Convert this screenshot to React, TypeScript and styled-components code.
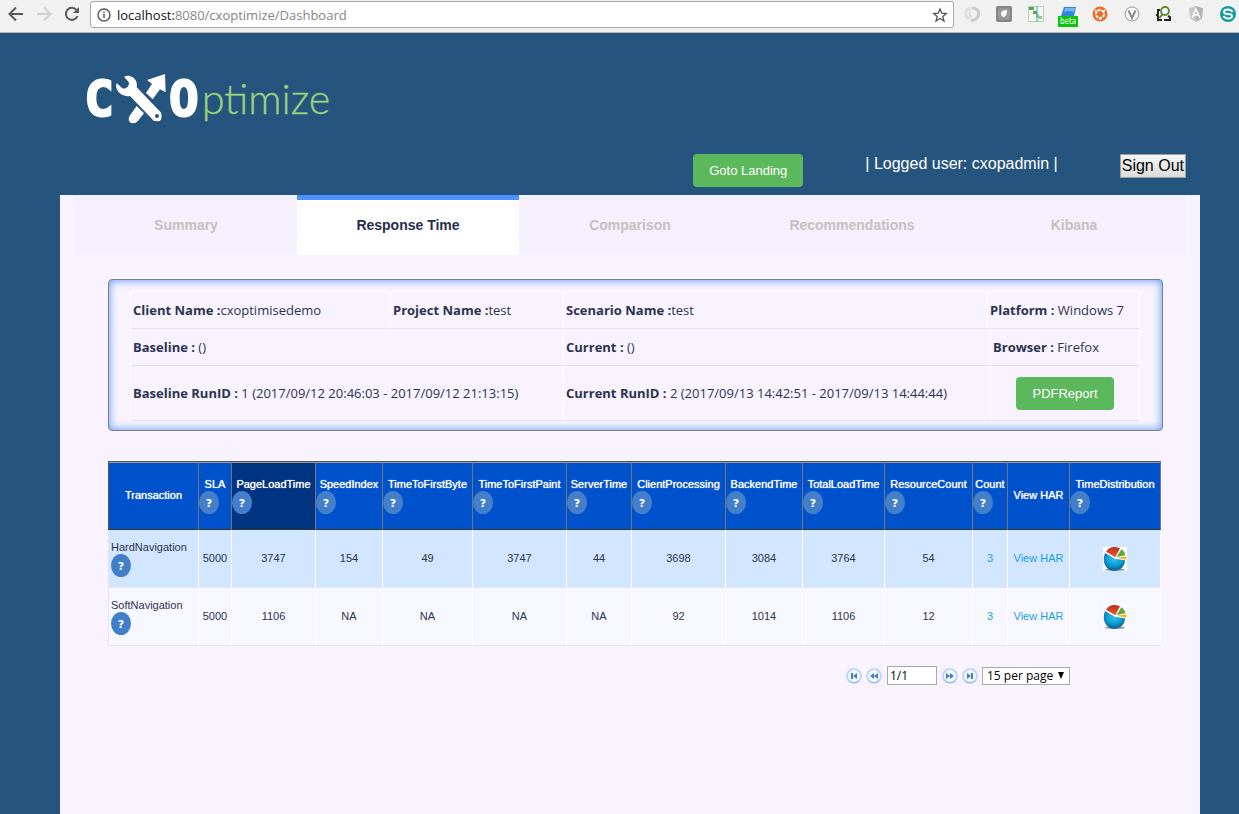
import React from "react";
import styled, { createGlobalStyle } from "styled-components";

const arial = `"Liberation Sans", Arial, sans-serif`;
const humanist = `"Open Sans", "Noto Sans", sans-serif`;

const GlobalStyle = createGlobalStyle`
  * { box-sizing: border-box; }
  body { margin: 0; background: #25547e; font-family: ${arial}; }
  button, input, select { font-family: inherit; margin: 0; }
`;

const Page = styled.div`
  min-height: 100vh;
  display: flex;
  flex-direction: column;
`;

const Toolbar = styled.nav`
  height: 33px;
  display: flex;
  align-items: flex-start;
  background: #f1f1f1;
  border-bottom: 1px solid #b4b4b4;
  padding: 1px 3px 0 8px;
`;

const NavButtons = styled.div`
  display: flex;
  gap: 12px;
  padding-top: 5px;
  margin-right: 10px;
`;

const IconButton = styled.button`
  width: 16px;
  height: 16px;
  padding: 0;
  border: 0;
  background: none;
  display: block;
  flex: none;
  svg { display: block; overflow: visible; }
`;

const AddressBar = styled.div`
  flex: 1;
  min-width: 0;
  height: 27px;
  display: flex;
  align-items: center;
  gap: 5px;
  padding: 0 5px;
  background: #fff;
  border: 1px solid #a9a9a9;
  border-radius: 3px;
`;

const Url = styled.div`
  flex: 1;
  font: 13px/20px ${humanist};
  color: #858585;
  span { color: #111; }
`;

const Extensions = styled.div`
  display: flex;
  gap: 16px;
  padding: 5px 0 0 10px;
`;

const Header = styled.header`
  height: 162px;
  padding: 37px 53px 0 84px;
`;

const UserRow = styled.div`
  display: flex;
  justify-content: flex-end;
  align-items: flex-start;
  margin-top: 24px;
`;

const LogoSvg = styled.svg`
  display: block;
`;

const GreenButton = styled.button`
  height: 33px;
  padding: 0 16px;
  border: 0;
  border-radius: 4px;
  background: #5cb85c;
  color: #fff;
  font-family: ${arial};
  font-size: 13px;
`;

const LoggedUser = styled.span`
  margin: 0 62px;
  color: #fff;
  font-size: 16px;
  line-height: 20px;
`;

const SignOut = styled.button`
  height: 24px;
  padding: 0 1px;
  border: 1px solid #a0a0a0;
  background: linear-gradient(#f6f6f6, #dcdcdc);
  color: #000;
  font-size: 16px;
`;

const Panel = styled.main`
  flex: 1;
  margin: 0 39px 0 60px;
  background: #f8f3fe;
`;

const Tabs = styled.div`
  display: flex;
  margin: 0 15px;
  background: #f4f0fe;
`;

const Tab = styled.button<{ $active?: boolean }>`
  flex: 1;
  height: 60px;
  padding: 0;
  border: 0;
  background: ${(p) => (p.$active ? "#fff" : "transparent")};
  box-shadow: ${(p) => (p.$active ? "inset 0 5px #4d90fe" : "none")};
  color: ${(p) => (p.$active ? "#252e4e" : "#c4c2bf")};
  font-size: 14px;
  font-weight: bold;
`;

const Content = styled.div`
  padding: 24px 37px 0 48px;
`;

const InfoCard = styled.section`
  padding: 11px 22px 9px 21px;
  border: 1px solid #808080;
  border-radius: 4px;
  box-shadow: inset 0 0 8px #4d90fe;
`;

const InfoTable = styled.table`
  width: 100%;
  table-layout: fixed;
  border-spacing: 0;
  border-top: 1px solid #fff;
  border-left: 1px solid #fff;
  font: 13px/16px ${humanist};
  color: #2b3350;
`;

const Col = styled.col<{ $w: number }>`
  width: ${(p) => p.$w}px;
`;

const InfoRow = styled.tr<{ $tall?: boolean }>`
  height: ${(p) => (p.$tall ? 55 : 37)}px;
`;

const InfoCell = styled.td<{ $center?: boolean }>`
  padding: 0 2px;
  border-right: 1px solid #fff;
  border-bottom: 1px solid #e6e3e8;
  text-align: ${(p) => (p.$center ? "center" : "left")};
  white-space: nowrap;
`;

const DataTable = styled.table`
  width: calc(100% - 2px);
  margin-top: 30px;
  table-layout: fixed;
  border-spacing: 0;
  font-size: 11px;
  line-height: 13px;
  color: #2b3350;
`;

const HeadCell = styled.th<{ $sorted?: boolean }>`
  height: 69px;
  padding: 0;
  background: ${(p) => (p.$sorted ? "#003380" : "#0052cc")};
  border-top: 1px solid #555;
  border-right: 1px solid #777;
  border-bottom: 1px solid #333;
  box-shadow: inset 0 1px #999;
  color: #fff;
  font-weight: normal;
  text-shadow: 0 0 1px #fff;
  white-space: nowrap;
  &:first-child { border-left: 1px solid #555; }
`;

const BodyRow = styled.tr<{ $shaded?: boolean }>`
  height: 58px;
  background: ${(p) => (p.$shaded ? "#d2e6ff" : "#f7f7ff")};
`;

const BodyCell = styled.td`
  padding: 0;
  border-right: 1px solid #fff;
  border-bottom: 1px solid #e6e6e6;
  text-align: center;
  &:first-child {
    padding-left: 2px;
    border-left: 1px solid #e6e6e6;
    text-align: left;
  }
  svg { display: block; margin: 0 auto; }
`;

const CellLink = styled.a`
  color: #1ba1e2;
  text-decoration: none;
`;

const Help = styled.button<{ $inHead?: boolean }>`
  display: block;
  width: 20px;
  height: 23px;
  padding: 2px 0 0;
  border: 0;
  border-radius: 50%;
  background: ${(p) => (p.$inHead ? "#447fcb" : "#427fcb")};
  color: #fff;
  font: bold 11px/13px "DejaVu Sans", Verdana, sans-serif;
`;

const Pager = styled.form`
  display: flex;
  justify-content: flex-end;
  align-items: center;
  gap: 4px;
  margin: 20px 93px 0 0;
  font-family: ${humanist};
`;

const PageInput = styled.input`
  width: 50px;
  height: 19px;
  margin: 0 1px;
  padding: 0 2px;
  border: 1px solid #a9a9a9;
  background: #fff;
  font-size: 12px;
`;

const SelectWrap = styled.div`
  position: relative;
  &::after {
    content: "";
    position: absolute;
    right: 6px;
    top: 5px;
    border: 3px solid transparent;
    border-top: 7px solid #000;
    border-bottom: 0;
    pointer-events: none;
  }
`;

const PageSelect = styled.select`
  display: block;
  width: 88px;
  height: 18px;
  padding: 0 4px;
  appearance: none;
  border: 1px solid #a9a9a9;
  border-radius: 0;
  background: #fff;
  color: #000;
  font-size: 12px;
  line-height: 16px;
`;

function Logo() {
  return (
    <LogoSvg width="250" height="60" viewBox="42 30 750 180" role="img" aria-label="CXOptimize">
      <g fill="#fff" stroke="#fff" strokeWidth="6" fontFamily="DejaVu Sans Mono, monospace" fontWeight="bold" fontSize="148">
        <text x="43" y="168">C</text>
        <text x="297" y="168">O</text>
      </g>
      <g fill="#fff">
        <path d="M231 60 285 42 287 97 270 88 248 118 228 99 246 71Z" />
        <path d="M200 138 222 160 203 184C194 193 178 191 176 179Q175 172 180 166Z" />
      </g>
      <path
        d="M162 50C176 43 193 50 199 65Q202 74 200 82L272 157Q277 165 273 179L268 184 252 183 180 108C163 111 145 101 139 84Q137 76 140 69L156 84Q164 89 173 80 180 73 176 66Z"
        fill="#fff"
        stroke="#25547e"
        strokeWidth="8"
        paintOrder="stroke"
      />
      <circle cx="261" cy="168" r="6" fill="#25547e" />
      <text x="395" y="162" fill="#9bd27c" stroke="#9bd27c" fontFamily="Lato, sans-serif" fontWeight="300" fontSize="124">ptimize</text>
    </LogoSvg>
  );
}

function Pie() {
  return (
    <svg width="24" height="24" viewBox="0 0 72 72" role="img" aria-label="Time distribution">
      <defs>
        <radialGradient id="pieBlue" cx="50%" cy="35%" r="65%">
          <stop offset="0" stopColor="#35c4ef" />
          <stop offset="0.6" stopColor="#0b98d0" />
          <stop offset="1" stopColor="#075b86" />
        </radialGradient>
        <linearGradient id="pieRed" x1="0" y1="0" x2="0" y2="1">
          <stop offset="0" stopColor="#b8321a" />
          <stop offset="1" stopColor="#ec5a32" />
        </linearGradient>
      </defs>
      <rect width="72" height="72" fill="#fff" />
      <ellipse cx="36" cy="68" rx="30" ry="4" fill="#8c8c8c" />
      <path d="M6 18 36 35 66 40C66 58 52 71 34 71 10 71-5 46 6 18Z" fill="url(#pieBlue)" />
      <path d="M9 14C18-2 38-3 51 4L37 31Z" fill="url(#pieRed)" />
      <path d="M55 7Q66 14 67 25L41 30Z" fill="#62a83b" />
      <path d="M42 32 69 28Q71 33 70 38Z" fill="#f6b320" />
    </svg>
  );
}

function PagerIcon({ kind }: { kind: "first" | "prev" | "next" | "last" }) {
  const flip = kind === "next" || kind === "last";
  const edge = kind === "first" || kind === "last";
  return (
    <svg width="16" height="16" viewBox="0 0 16 16">
      <circle cx="8" cy="8" r="7" fill="#f4f8ff" stroke="#c3d7f6" strokeWidth="2" />
      <path d="M2.600 12A7 7 0 0 0 13.400 12" fill="none" stroke="#9db6da" />
      <g fill="#3f7fc8" transform={flip ? "translate(16 0) scale(-1 1)" : undefined}>
        {edge ? <path d="M5 5h2v6H5ZM11 5v6L7 8Z" /> : <path d="M8 5v6L4 8ZM12 5v6L8 8Z" />}
      </g>
    </svg>
  );
}

const stroke = { fill: "none", stroke: "#5a5a5a", strokeWidth: 2 } as const;

const extensions: { name: string; art: React.ReactNode }[] = [
  { name: "JSON viewer", art: <g fill="none" strokeWidth="3"><path d="M6 13C0 11 0 3 7 2" stroke="#dedede" /><path d="M8 2C17 2 17 13 7 15" stroke="#cacaca" /><path d="M6 5Q4 10 8 11" stroke="#dedede" strokeWidth="2" /></g> },
  { name: "Capture", art: <><rect width="16" height="16" rx="2" fill="#858585" /><rect x="2" y="2" width="12" height="12" rx="2" fill="#999" /><path d="M5 7Q6 4 11 4 11 10 8 11 5 11 5 7Z" fill="#fff" /></> },
  { name: "Page ruler", art: <><rect x=".5" y=".5" width="15" height="15" fill="#f3f7ee" stroke="#c4cdc0" /><path d="M1 1h5v3H1ZM5 5h4v3H5Z" fill="#5da34a" /><path d="M8 8h3v4H8ZM11 10h3v3h-3Z" fill="#9bc48c" /><path d="M9 0v16" stroke="#23b6d2" /></> },
  { name: "Beta tool", art: <><path d="M4 1h12l-2 9H1Z" fill="#2f86dc" /><path d="M5 2h10l-1 4Q8 4 4 6Z" fill="#6db5f5" /><rect x="-2" y="10" width="20" height="11" fill="#0cc40c" /><text x="8" y="18" textAnchor="middle" fontFamily="DejaVu Sans Condensed" fontSize="8" fill="#fff">beta</text></> },
  { name: "Wheel", art: <><circle cx="8" cy="8" r="7.500" fill="#ee6b25" /><circle cx="8" cy="8" r="4" fill="none" stroke="#fff" strokeWidth="2" strokeDasharray="3 1" /><path d="M3 4l2 2M13 4l-2 2M8 11v3" stroke="#fff" strokeWidth="1.500" /></> },
  { name: "Validator", art: <><circle cx="8" cy="8" r="7" fill="#f5f5f5" stroke="#999" /><path d="M4.500 4.500 8 12 11.500 4.500" fill="none" stroke="#888" strokeWidth="2" /></> },
  { name: "Code search", art: <><path d="M4 4H2v4L1 9 2 10v4H6M12 10l2 1v3H8" fill="none" stroke="#222" strokeWidth="2" /><circle cx="9" cy="5" r="4" fill="#f7f7f7" stroke="#568b2c" strokeWidth="1.800" /><path d="M6.500 8 3.500 12" stroke="#568b2c" strokeWidth="2" /></> },
  { name: "Angular", art: <><path d="M8 0 15 2.500 14 12.500 8 16 2 12.500 1 2.500Z" fill="#c8c8c8" /><path d="M8 0 15 2.500 14 12.500 8 16Z" fill="#b4b4b4" /><path d="M4 12 8 3 12 12M5.500 9h5" fill="none" stroke="#fff" strokeWidth="1.500" /></> },
  { name: "Sync", art: <><circle cx="8" cy="8" r="8" fill="#149d9c" /><path d="M12.500 6Q11 3.500 8 3.500 4 3.500 4 6 4 8 8 8T12 10Q12 12.500 8 12.500 5 12.500 3.500 10" fill="none" stroke="#fff" strokeWidth="1.800" /></> },
];

const columns: { label: string; width: number; help: boolean }[] = [
  { label: "Transaction", width: 91, help: false },
  { label: "SLA", width: 33, help: true },
  { label: "PageLoadTime", width: 84, help: true },
  { label: "SpeedIndex", width: 67, help: true },
  { label: "TimeToFirstByte", width: 90, help: true },
  { label: "TimeToFirstPaint", width: 94, help: true },
  { label: "ServerTime", width: 65, help: true },
  { label: "ClientProcessing", width: 94, help: true },
  { label: "BackendTime", width: 77, help: true },
  { label: "TotalLoadTime", width: 82, help: true },
  { label: "ResourceCount", width: 88, help: true },
  { label: "Count", width: 35, help: true },
  { label: "View HAR", width: 62, help: false },
  { label: "TimeDistribution", width: 91, help: true },
];

const rows = [
  { name: "HardNavigation", values: ["5000", "3747", "154", "49", "3747", "44", "3698", "3084", "3764", "54"], count: "3" },
  { name: "SoftNavigation", values: ["5000", "1106", "NA", "NA", "NA", "NA", "92", "1014", "1106", "12"], count: "3" },
];

const tabs = ["Summary", "Response Time", "Comparison", "Recommendations", "Kibana"];

export default function App() {
  return (
    <Page>
      <GlobalStyle />
      <Toolbar>
        <NavButtons>
          <IconButton aria-label="Back">
            <svg width="16" height="16" {...stroke}><path d="M15 8H2M8 1.500 1.500 8 8 14.500" /></svg>
          </IconButton>
          <IconButton aria-label="Forward">
            <svg width="16" height="16" {...stroke} stroke="#d0d0d0"><path d="M1 8h13M8 1.500 14.500 8 8 14.500" /></svg>
          </IconButton>
          <IconButton aria-label="Reload">
            <svg width="16" height="16" {...stroke}><path d="M13.500 10A6 6 0 1 1 12.500 4" /><path d="M15 1v6H9Z" fill="#5a5a5a" stroke="none" /></svg>
          </IconButton>
        </NavButtons>
        <AddressBar>
          <IconButton aria-label="Site information">
            <svg width="16" height="16"><circle cx="8" cy="8" r="6" fill="none" stroke="#5a5a5a" strokeWidth="1.500" /><path d="M8 7v4M8 4.500v1.500" stroke="#5a5a5a" strokeWidth="1.500" /></svg>
          </IconButton>
          <Url><span>localhost:</span>8080/cxoptimize/Dashboard</Url>
          <IconButton aria-label="Bookmark">
            <svg width="16" height="16"><path d="M8 2 9.800 6.200 14.300 6.500 10.800 9.500 12 14 8 11.500 4 14 5.200 9.500 1.700 6.500 6.200 6.200Z" fill="none" stroke="#555" strokeWidth="1.300" /></svg>
          </IconButton>
        </AddressBar>
        <Extensions>
          {extensions.map((e) => (
            <IconButton key={e.name} aria-label={e.name}>
              <svg width="16" height="16" viewBox="0 0 16 16">{e.art}</svg>
            </IconButton>
          ))}
        </Extensions>
      </Toolbar>

      <Header>
        <Logo />
        <UserRow>
          <GreenButton>Goto Landing</GreenButton>
          <LoggedUser>| Logged user: cxopadmin |</LoggedUser>
          <SignOut>Sign Out</SignOut>
        </UserRow>
      </Header>

      <Panel>
        <Tabs role="tablist">
          {tabs.map((t) => (
            <Tab key={t} role="tab" aria-selected={t === "Response Time"} $active={t === "Response Time"}>{t}</Tab>
          ))}
        </Tabs>
        <Content>
          <InfoCard>
            <InfoTable>
              <colgroup>
                <Col $w={260} />
                <Col $w={173} />
                <Col $w={424} />
                <Col $w={3} />
                <Col $w={149} />
              </colgroup>
              <tbody>
                <InfoRow>
                  <InfoCell><b>Client Name :</b>cxoptimisedemo</InfoCell>
                  <InfoCell><b>Project Name :</b>test</InfoCell>
                  <InfoCell><b>Scenario Name :</b>test</InfoCell>
                  <InfoCell colSpan={2}><b>Platform :</b> Windows 7</InfoCell>
                </InfoRow>
                <InfoRow>
                  <InfoCell colSpan={2}><b>Baseline :</b> ()</InfoCell>
                  <InfoCell colSpan={2}><b>Current :</b> ()</InfoCell>
                  <InfoCell><b>Browser :</b> Firefox</InfoCell>
                </InfoRow>
                <InfoRow $tall>
                  <InfoCell colSpan={2}><b>Baseline RunID :</b> 1 (2017/09/12 20:46:03 - 2017/09/12 21:13:15)</InfoCell>
                  <InfoCell colSpan={2}><b>Current RunID :</b> 2 (2017/09/13 14:42:51 - 2017/09/13 14:44:44)</InfoCell>
                  <InfoCell $center><GreenButton>PDFReport</GreenButton></InfoCell>
                </InfoRow>
              </tbody>
            </InfoTable>
          </InfoCard>

          <DataTable>
            <colgroup>
              {columns.map((c) => <Col key={c.label} $w={c.width} />)}
            </colgroup>
            <thead>
              <tr>
                {columns.map((c) => (
                  <HeadCell key={c.label} $sorted={c.label === "PageLoadTime"}>
                    {c.label}
                    {c.help && <Help $inHead aria-label={`About ${c.label}`}>?</Help>}
                  </HeadCell>
                ))}
              </tr>
            </thead>
            <tbody>
              {rows.map((r, i) => (
                <BodyRow key={r.name} $shaded={i % 2 === 0}>
                  <BodyCell>
                    {r.name}
                    <Help aria-label={`About ${r.name}`}>?</Help>
                  </BodyCell>
                  {r.values.map((v, j) => <BodyCell key={j}>{v}</BodyCell>)}
                  <BodyCell><CellLink href="#count">{r.count}</CellLink></BodyCell>
                  <BodyCell><CellLink href="#har">View HAR</CellLink></BodyCell>
                  <BodyCell><Pie /></BodyCell>
                </BodyRow>
              ))}
            </tbody>
          </DataTable>

          <Pager onSubmit={(e) => e.preventDefault()}>
            <IconButton type="button" aria-label="First page"><PagerIcon kind="first" /></IconButton>
            <IconButton type="button" aria-label="Previous page"><PagerIcon kind="prev" /></IconButton>
            <PageInput aria-label="Page" defaultValue="1/1" />
            <IconButton type="button" aria-label="Next page"><PagerIcon kind="next" /></IconButton>
            <IconButton type="button" aria-label="Last page"><PagerIcon kind="last" /></IconButton>
            <SelectWrap>
              <PageSelect aria-label="Rows per page" defaultValue="15">
                <option value="15">15 per page</option>
                <option value="30">30 per page</option>
              </PageSelect>
            </SelectWrap>
          </Pager>
        </Content>
      </Panel>
    </Page>
  );
}
